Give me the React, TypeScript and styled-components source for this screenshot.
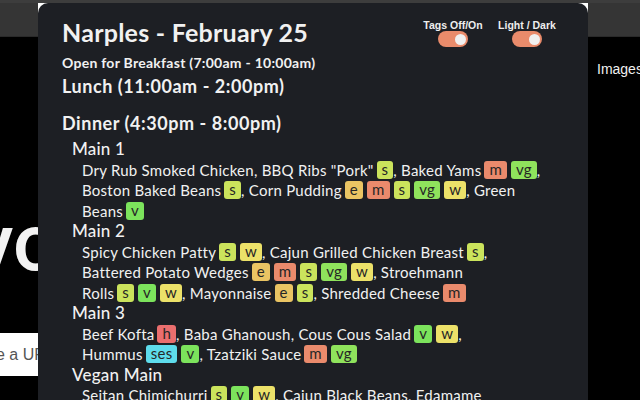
import React from "react";
import styled, { createGlobalStyle } from "styled-components";

const Global = createGlobalStyle`
  html, body { margin: 0; padding: 0; background: #000; }
  body { width: 640px; height: 400px; overflow: hidden; font-family: "Lato", "Liberation Sans", sans-serif; }
`;

const Page = styled.div`
  position: relative;
  width: 640px;
  height: 400px;
  overflow: hidden;
  background: #000;
  display: flex;
  flex-direction: column;
`;

const TopBar = styled.div`
  height: 37px;
  flex: none;
  background: #353535;
  border-top: 3px solid #3d3d3d;
  box-sizing: border-box;
  border-bottom: 1px solid #2a2a2a;
`;

const Body = styled.div`
  flex: 1;
  display: flex;
  justify-content: space-between;
`;

const LeftCol = styled.div`
  width: 60px;
  display: flex;
  flex-direction: column;
  overflow: hidden;
`;

const BigText = styled.div`
  margin-top: 166px;
  margin-left: -26px;
  font-family: "Roboto", "Liberation Sans", sans-serif;
  font-weight: 500;
  font-size: 80px;
  line-height: 80px;
  height: 80px;
  color: #f2f2f2;
  white-space: nowrap;
`;

const UrlBox = styled.div`
  margin-top: 50px;
  height: 43px;
  width: 60px;
  background: #fff;
  display: flex;
  align-items: center;
  overflow: hidden;
  white-space: nowrap;
  font-family: "Liberation Sans", sans-serif;
  font-size: 16px;
  color: #555;
  text-indent: -4px;
`;

const RightCol = styled.div`
  padding-top: 24px;
  font-family: "Liberation Sans", sans-serif;
  font-size: 14px;
  line-height: 16px;
  font-weight: 400;
  color: #f0f0f0;
  width: 43px;
  overflow: hidden;
  white-space: nowrap;
`;

const PopupFrame = styled.div`
  position: absolute;
  left: 38px;
  top: 3px;
  width: 550px;
  height: 420px;
  background: #fff;
`;

const Popup = styled.div`
  width: 100%;
  height: 100%;
  background: #1d1f24;
  border-radius: 10px 10px 0 0;
  box-sizing: border-box;
  padding: 14px 0 0 24px;
  color: #f1f1f1;
  font-family: "Lato", sans-serif;
`;

const Header = styled.div`
  display: flex;
  justify-content: space-between;
  align-items: flex-start;
`;

const Title = styled.h1`
  margin: 0;
  font-size: 25px;
  font-weight: 700;
  line-height: 30px;
  letter-spacing: 0.25px;
`;

const Toggles = styled.div`
  display: flex;
  gap: 14px;
  margin-right: 31px;
  margin-top: 2px;
`;

const ToggleBox = styled.div`
  width: 60px;
  display: flex;
  flex-direction: column;
  align-items: center;
`;

const ToggleLabel = styled.div`
  font-family: "Liberation Sans", sans-serif;
  font-weight: 700;
  font-size: 10.5px;
  color: #eee;
  line-height: 12px;
  white-space: nowrap;
`;

const Switch = styled.div`
  width: 30px;
  height: 16px;
  border-radius: 8px;
  background: #e98b6b;
  display: flex;
  align-items: center;
  justify-content: flex-end;
  padding: 0 2.5px;
  box-sizing: border-box;
`;

const Knob = styled.div`
  width: 11px;
  height: 11px;
  border-radius: 50%;
  background: #f0f0f0;
`;

const Breakfast = styled.div`
  margin-top: 7px;
  font-size: 14px;
  font-weight: 700;
  line-height: 18px;
  letter-spacing: 0.27px;
`;

const Meal = styled.div<{ $gap: number }>`
  margin-top: ${(p) => p.$gap}px;
  font-size: 18px;
  font-weight: 700;
  line-height: 22px;
  letter-spacing: 0.55px;
`;

const Stations = styled.div`
  margin-top: 5px;
`;

const Station = styled.div`
  margin-left: 10px;
  font-size: 17px;
  font-weight: 500;
  line-height: 20.5px;
  letter-spacing: 0.2px;
`;

const Line = styled.div`
  margin-left: 20px;
  font-size: 15px;
  line-height: 20.5px;
  height: 20.5px;
  letter-spacing: 0.25px;
  white-space: pre;
  display: flex;
  align-items: center;
`;

const tagColors: Record<string, string> = {
  s: "#cbe35c",
  m: "#ea8a6c",
  vg: "#8fe35c",
  e: "#eac463",
  w: "#ece169",
  v: "#7ce35c",
  h: "#ea6e6e",
  ses: "#5edcec",
};

const Tag = styled.span<{ $c: string }>`
  display: inline-block;
  background: ${(p) => p.$c};
  color: #262626;
  border-radius: 3px;
  padding: 0 5px;
  height: 18px;
  line-height: 17px;
  font-size: 15px;
  margin-left: 3px;
  & + & {
    margin-left: 4px;
  }
`;

type Seg = string | string[];

const MenuLine = ({ segs }: { segs: Seg[] }) => (
  <Line>
    {segs.map((s, i) =>
      typeof s === "string" ? (
        <span key={i}>{s}</span>
      ) : (
        s.map((t, j) => (
          <Tag key={`${i}-${j}`} $c={tagColors[t]}>
            {t}
          </Tag>
        ))
      )
    )}
  </Line>
);

const stations: { name: string; lines: Seg[][] }[] = [
  {
    name: "Main 1",
    lines: [
      ["Dry Rub Smoked Chicken, BBQ Ribs \"Pork\"", ["s"], ", Baked Yams", ["m", "vg"], ","],
      ["Boston Baked Beans", ["s"], ", Corn Pudding", ["e", "m", "s", "vg", "w"], ", Green"],
      ["Beans", ["v"]],
    ],
  },
  {
    name: "Main 2",
    lines: [
      ["Spicy Chicken Patty", ["s", "w"], ", Cajun Grilled Chicken Breast", ["s"], ","],
      ["Battered Potato Wedges", ["e", "m", "s", "vg", "w"], ", Stroehmann"],
      ["Rolls", ["s", "v", "w"], ", Mayonnaise", ["e", "s"], ", Shredded Cheese", ["m"]],
    ],
  },
  {
    name: "Main 3",
    lines: [
      ["Beef Kofta", ["h"], ", Baba Ghanoush, Cous Cous Salad", ["v", "w"], ","],
      ["Hummus", ["ses", "v"], ", Tzatziki Sauce", ["m", "vg"]],
    ],
  },
  {
    name: "Vegan Main",
    lines: [["Seitan Chimichurri", ["s", "v", "w"], ", Cajun Black Beans, Edamame"]],
  },
];

export default function App() {
  return (
    <>
      <Global />
      <Page>
        <TopBar />
        <Body>
          <LeftCol>
            <BigText>vo</BigText>
            <UrlBox>e a URL</UrlBox>
          </LeftCol>
          <RightCol>Images</RightCol>
        </Body>
        <PopupFrame>
          <Popup>
            <Header>
              <Title>Narples - February 25</Title>
              <Toggles>
                <ToggleBox>
                  <ToggleLabel>Tags Off/On</ToggleLabel>
                  <Switch><Knob /></Switch>
                </ToggleBox>
                <ToggleBox>
                  <ToggleLabel>Light / Dark</ToggleLabel>
                  <Switch><Knob /></Switch>
                </ToggleBox>
              </Toggles>
            </Header>
            <Breakfast>Open for Breakfast (7:00am - 10:00am)</Breakfast>
            <Meal $gap={3}>Lunch (11:00am - 2:00pm)</Meal>
            <Meal $gap={15}>Dinner (4:30pm - 8:00pm)</Meal>
            <Stations>
              {stations.map((st) => (
                <React.Fragment key={st.name}>
                  <Station>{st.name}</Station>
                  {st.lines.map((l, i) => (
                    <MenuLine key={i} segs={l} />
                  ))}
                </React.Fragment>
              ))}
            </Stations>
          </Popup>
        </PopupFrame>
      </Page>
    </>
  );
}
